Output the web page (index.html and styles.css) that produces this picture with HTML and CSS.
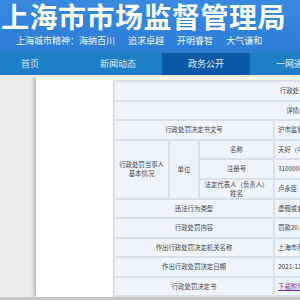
FILE: index.html
```html
<!DOCTYPE html>
<html lang="zh-CN">

<head>
    <meta charset="UTF-8">
    <meta name="viewport" content="width=device-width, initial-scale=1.0">
    <title>上海市市场监督管理局</title>
    <link rel="stylesheet" href="styles.css">
</head>

<body>
    <div class="header">
        <h1 class="title">上海市市场监督管理局</h1>
        <div class="motto">
            <span>上海城市精神：海纳百川</span>
            <span>追求卓越</span>
            <span>开明睿智</span>
            <span>大气谦和</span>
        </div>
    </div>

    <div class="nav">
        <a class="nav-item">首页</a>
        <a class="nav-item">新闻动态</a>
        <a class="nav-item active">政务公开</a>
        <a class="nav-item">一网通办</a>
    </div>
    <div class="nav-line"></div>

    <div class="page">
        <div class="content">
            <table class="info">
                <colgroup>
                    <col style="width: 55px;">
                    <col style="width: 30px;">
                    <col style="width: 75px;">
                    <col style="width: 210px;">
                </colgroup>
                <tr>
                    <td colspan="4" class="center">行政处罚公示</td>
                </tr>
                <tr>
                    <td colspan="4" class="center">详情信息</td>
                </tr>
                <tr>
                    <td colspan="3" class="center">行政处罚决定书文号</td>
                    <td>沪市监管黄处〔2021〕012021000868号</td>
                </tr>
                <tr>
                    <td rowspan="3" class="center">行政处罚当事人<br>基本情况</td>
                    <td rowspan="3" class="center">单位</td>
                    <td class="center">名称</td>
                    <td>天好（中国）有限公司</td>
                </tr>
                <tr>
                    <td class="center">注册号</td>
                    <td>310000400123456</td>
                </tr>
                <tr>
                    <td class="center tight">法定代表人（负责人）姓名</td>
                    <td>卢永臣</td>
                </tr>
                <tr>
                    <td colspan="3" class="center">违法行为类型</td>
                    <td>虚假或者引人误解的商业宣传</td>
                </tr>
                <tr>
                    <td colspan="3" class="center">行政处罚内容</td>
                    <td>罚款20.0万元</td>
                </tr>
                <tr>
                    <td colspan="3" class="center">作出行政处罚决定机关名称</td>
                    <td>上海市黄浦区市场监督管理局</td>
                </tr>
                <tr>
                    <td colspan="3" class="center">作出行政处罚决定日期</td>
                    <td>2021-11-15</td>
                </tr>
                <tr>
                    <td colspan="3" class="center">行政处罚决定书</td>
                    <td><a class="file-link" href="#">下载附件</a></td>
                </tr>
            </table>
        </div>
    </div>

    <div class="footer"></div>
</body>

</html>
```

FILE: styles.css
```css
html,
body {
    margin: 0;
    padding: 0;
    overflow: hidden;
    background-color: #ececec;
    font-family: "Noto Sans CJK SC", "Noto Sans", sans-serif;
}

.header {
    height: 53px;
    background: linear-gradient(#3889df, #2b7cd4);
    color: #fff;
    overflow: hidden;
}

.title {
    margin: 0;
    padding-left: 1px;
    font-size: 28px;
    line-height: 32px;
    font-weight: bold;
    letter-spacing: 0.5px;
    white-space: nowrap;
}

.motto {
    padding-left: 16px;
    font-size: 9px;
    line-height: 12px;
    margin-top: 3px;
    white-space: nowrap;
    color: #f2f7ff;
}

.motto span {
    margin-right: 11px;
}

.nav {
    display: flex;
    height: 22px;
    margin-left: -14px;
    background-color: #1b7ec6;
    white-space: nowrap;
}

.nav-item {
    flex: none;
    width: 88px;
    line-height: 22px;
    text-align: center;
    font-size: 9px;
    color: #e3edf8;
}

.nav-item.active {
    background-color: #0b59a6;
}

.nav-line {
    height: 2px;
    background-color: #fbf4ec;
}

.page {
    height: 220px;
    background-color: #ececec;
}

.content {
    margin-left: 36px;
    height: 220px;
    padding-top: 3px;
    padding-left: 77px;
    box-sizing: border-box;
    background-color: #fff;
    box-shadow: -3px 0 3px rgba(0, 0, 0, 0.18);
}

.info {
    table-layout: fixed;
    width: 370px;
    border-collapse: collapse;
    font-size: 6.4px;
    color: #444;
}

.info td {
    height: 17.5px;
    padding: 0 3px;
    border: 2px solid #d8e1eb;
    background-color: #eff5fd;
    white-space: nowrap;
    line-height: 9px;
}

.info td.center {
    text-align: center;
}

.info td.tight {
    white-space: normal;
    padding: 0 2px;
}

.file-link {
    color: #7b2f9e;
}

.footer {
    height: 10px;
    background-color: #c6c6c6;
}
```
